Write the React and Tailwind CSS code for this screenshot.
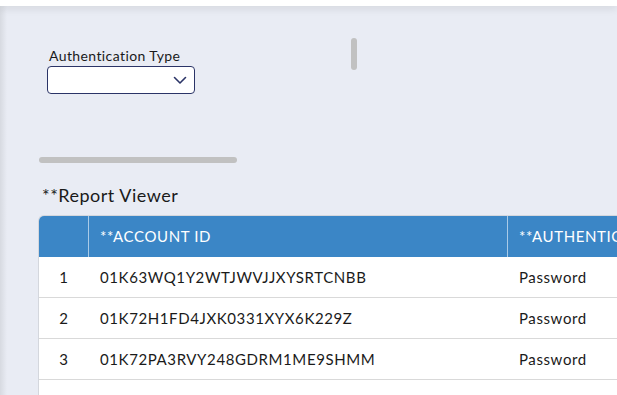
import React from 'react';

const rows = [
  { n: 1, id: '01K63WQ1Y2WTJWVJJXYSRTCNBB', auth: 'Password' },
  { n: 2, id: '01K72H1FD4JXK0331XYX6K229Z', auth: 'Password' },
  { n: 3, id: '01K72PA3RVY248GDRM1ME9SHMM', auth: 'Password' },
  { n: 4, id: '01K7BBZFH8GWNSEMNPUBA90SJKV9', auth: 'OAuth' },
];

export default function App() {
  return (
    <div
      className="flex h-[395px] w-[617px] flex-col overflow-hidden bg-[#e9ecf4] text-[#1a1a1a]"
      style={{ fontFamily: 'Lato, "Open Sans", sans-serif' }}
    >
      {/* Top bar */}
      <div className="relative z-10 h-[6px] shrink-0 bg-white shadow-[0_2px_8px_rgba(0,0,0,0.12)]" />

      <div className="flex flex-1">
        {/* Left edge */}
        <div className="w-[7px] shrink-0 bg-gradient-to-r from-[#d7dae1] to-[#e9ecf4]" />

        <div className="flex-1 pl-[31px]">
          {/* Filters */}
          <div className="flex items-start pt-[32px]">
            <div className="ml-[9px] mt-[7px] flex flex-col">
              <span className="pl-[2px] text-[14px] leading-[21px] tracking-[0.4px]">Authentication Type</span>
              <div className="flex h-[28px] w-[148px] items-center justify-end rounded-[4px] border border-[#2b3467] bg-white pr-[7px]">
                <svg width="14" height="9" viewBox="0 0 14 9" fill="none">
                  <path d="M1.5 1.5 L7 7 L12.5 1.5" stroke="#2b3467" strokeWidth="1.6" strokeLinecap="round" strokeLinejoin="round" />
                </svg>
              </div>
            </div>
            <div className="ml-[156px] h-[32px] w-[6px] rounded-full bg-[#c1c1c1]" />
          </div>

          {/* Horizontal scroll thumb */}
          <div className="ml-[1px] mt-[63px] h-[6px] w-[198px] rounded-full bg-[#c1c1c1]" />

          <h2 className="ml-[4px] mt-[20px] text-[18px] leading-[25px] tracking-[0.5px]">**Report Viewer</h2>

          {/* Table */}
          <div className="mt-[7px] w-[620px] overflow-hidden rounded-tl-[6px] border-l border-t border-[#d4d7dd] bg-white text-[15px] tracking-[0.6px]">
            <div className="flex h-[41px] items-center bg-[#3b86c6] text-white">
              <div className="h-full w-[50px] shrink-0 border-r border-[#a9cbe8]" />
              <div className="flex h-full w-[419px] shrink-0 items-center border-r border-[#a9cbe8] pl-[11px]">**ACCOUNT ID</div>
              <div className="flex h-full items-center whitespace-nowrap pl-[11px]">**AUTHENTICATION TYPE</div>
            </div>
            {rows.map((r) => (
              <div key={r.n} className="flex h-[41px] items-center border-b border-[#d9d9d9]">
                <div className="w-[50px] shrink-0 text-center">{r.n}</div>
                <div className="w-[419px] shrink-0 pl-[11px]">{r.id}</div>
                <div className="pl-[11px]">{r.auth}</div>
              </div>
            ))}
          </div>
        </div>
      </div>
    </div>
  );
}
